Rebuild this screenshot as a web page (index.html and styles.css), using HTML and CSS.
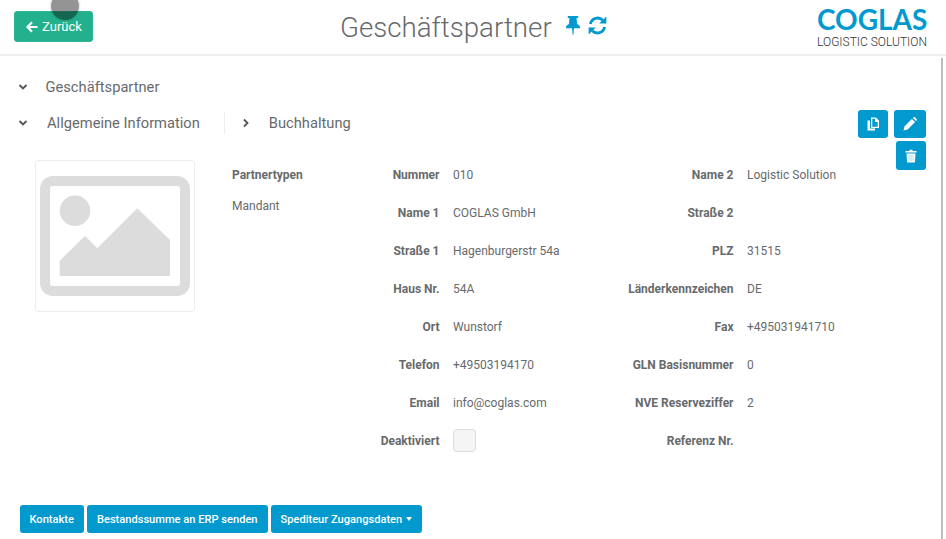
FILE: index.html
```html
<!DOCTYPE html>
<html lang="de">
<head>
<meta charset="utf-8">
<title>Geschäftspartner</title>
<link rel="stylesheet" href="styles.css">
</head>
<body>
<header class="top">
  <div class="ripple"></div>
  <button class="btn-back"><svg class="ico-arrow" viewBox="0 0 12 12"><path d="M6 1.200 1.500 6 6 10.800M1.800 6H11.500" fill="none" stroke="#fff" stroke-width="2.200"/></svg>Zurück</button>
  <div class="title-wrap">
    <h1 class="title">Geschäftspartner</h1>
    <svg class="ico-pin" viewBox="0 0 16 20"><path d="M2.500 0h11v2h-1.800l.6 6.500c1.900.8 3.200 2.300 3.200 4.300H9l-.6 7h-.8l-.6-7H.5C.5 10.800 1.800 9.300 3.700 8.500L4.300 2H2.500z" fill="#0299cf"/></svg>
    <svg class="ico-sync" viewBox="0 0 20 20"><path d="M2.500 8.500A7.800 7.800 0 0 1 15.600 4.400M17.500 11.500A7.800 7.800 0 0 1 4.400 15.600" fill="none" stroke="#0299cf" stroke-width="3"/><path d="M19.300 .5v7.500h-7.500zM.7 19.500v-7.500h7.500z" fill="#0299cf"/></svg>
  </div>
  <div class="logo"><div class="logo-main">COGLAS</div><div class="logo-sub">LOGISTIC SOLUTION</div></div>
</header>
<div class="scroll-line"></div>
<main class="content">
  <div class="acc-row">
    <svg class="chev" viewBox="0 0 10 10"><path d="M1.500 3 5 6.500 8.500 3" fill="none" stroke="#555" stroke-width="1.800"/></svg>
    <span class="acc-title">Geschäftspartner</span>
  </div>
  <div class="tabs">
    <svg class="chev" viewBox="0 0 10 10"><path d="M1.500 3 5 6.500 8.500 3" fill="none" stroke="#555" stroke-width="1.800"/></svg>
    <span class="tab tab-first">Allgemeine Information</span>
    <span class="tab-sep"></span>
    <svg class="chev chev-right" viewBox="0 0 10 10"><path d="M3 1.500 6.500 5 3 8.500" fill="none" stroke="#555" stroke-width="1.800"/></svg>
    <span class="tab">Buchhaltung</span>
    <div class="actions">
      <button class="icon-btn"><svg viewBox="0 0 14 14" class="ico-s"><path d="M5 .5h5L13 3.500V11H5z M1.500 3.500H4v8h5V13.500H1.500z" fill="#fff"/><path d="M6.300 1.800h2.700V5h2.700v4.700H6.300z" fill="#0299cf"/></svg></button>
      <button class="icon-btn icon-btn-wide"><svg viewBox="0 0 14 14" class="ico-s"><path d="M.5 13.500 1.400 9.400 8.900 1.900l3.200 3.200-7.500 7.500zM9.900 1l.7-.6c.5-.4 1.100-.4 1.500 0l1.500 1.500c.4.400.4 1 0 1.500l-.6.700z" fill="#fff"/></svg></button>
      <button class="icon-btn icon-btn-del"><svg viewBox="0 0 14 14" class="ico-s"><path d="M1.500 2h3.700L5.800.7h2.400L8.800 2h3.700v1.500h-11zM2.500 4.500h9l-.6 9H3.100z" fill="#fff"/><rect x="4.300" y="6" width="5.400" height="6" fill="#d6edf6"/></svg></button>
    </div>
  </div>
  <section class="detail">
    <div class="photo">
      <svg viewBox="0 0 150 120" class="photo-svg">
        <rect x="5" y="5" width="140" height="110" rx="8" fill="none" stroke="#dcdcdc" stroke-width="10"/>
        <circle cx="35" cy="34.700" r="15.300" fill="#dcdcdc"/>
        <path d="M19.700 100V84.700L45 60 57.300 72.300 97.300 32.300 130 64V100z" fill="#dcdcdc"/>
      </svg>
    </div>
    <div class="types">
      <div class="lbl">Partnertypen</div>
      <div class="val types-val">Mandant</div>
    </div>
    <div class="grid">
      <div class="lbl r">Nummer</div><div class="val">010</div><div class="lbl r">Name 2</div><div class="val">Logistic Solution</div>
      <div class="lbl r">Name 1</div><div class="val">COGLAS GmbH</div><div class="lbl r">Straße 2</div><div class="val"></div>
      <div class="lbl r">Straße 1</div><div class="val">Hagenburgerstr 54a</div><div class="lbl r">PLZ</div><div class="val">31515</div>
      <div class="lbl r">Haus Nr.</div><div class="val">54A</div><div class="lbl r">Länderkennzeichen</div><div class="val">DE</div>
      <div class="lbl r">Ort</div><div class="val">Wunstorf</div><div class="lbl r">Fax</div><div class="val">+495031941710</div>
      <div class="lbl r">Telefon</div><div class="val">+49503194170</div><div class="lbl r">GLN Basisnummer</div><div class="val">0</div>
      <div class="lbl r">Email</div><div class="val">info@coglas.com</div><div class="lbl r">NVE Reserveziffer</div><div class="val">2</div>
      <div class="lbl r">Deaktiviert</div><div class="val"><span class="check"></span></div><div class="lbl r">Referenz Nr.</div><div class="val"></div>
    </div>
  </section>
  <div class="footer-btns">
    <button class="btn">Kontakte</button>
    <button class="btn">Bestandssumme an ERP senden</button>
    <button class="btn">Spediteur Zugangsdaten<span class="caret"></span></button>
  </div>
</main>
</body>
</html>
```
FILE: styles.css
```css
* { box-sizing: border-box; }
html, body { margin: 0; height: 539px; overflow: hidden; }
body { background: #fff; font-family: Roboto, sans-serif; color: #676a6c; font-size: 12px; position: relative; }
button { font-family: Roboto, sans-serif; border: 0; cursor: pointer; }

.top { height: 56px; border-bottom: 2px solid #eee; display: flex; align-items: flex-start; position: relative; }
.ripple { position: absolute; left: 51px; top: -8px; width: 28px; height: 28px; border-radius: 50%; background: rgba(0,0,0,.42); box-shadow: 0 0 2px 1px rgba(0,0,0,.12); z-index: 2; }
.btn-back { margin: 11px 0 0 14px; width: 79px; height: 31px; background: #23b08c; color: #fff; font-size: 13px; border-radius: 3px; border: 1px solid #2bb594; display: flex; align-items: center; justify-content: center; padding: 0 0 0 1px; gap: 4px; }
.ico-arrow { width: 12px; height: 12px; }
.title-wrap { display: flex; align-items: center; margin: 11px 0 0 247px; height: 32px; }
.title { margin: 0; font-weight: 300; font-size: 27.700px; color: #676a6c; white-space: nowrap; }
.ico-pin { width: 16px; height: 19px; margin-left: 13px; margin-top: -4px; }
.ico-sync { width: 19px; height: 19px; margin-left: 7px; margin-top: -3px; }
.logo { margin-left: auto; margin-right: 19px; margin-top: 5px; width: 110px; text-align: center; }
.logo-main { font-family: Lato, sans-serif; font-weight: 700; font-size: 28px; line-height: 28px; color: #0299cf; white-space: nowrap; }
.logo-sub { font-weight: 300; font-size: 12px; line-height: 16px; margin-top: 1px; color: #333; white-space: nowrap; }

.scroll-line { position: absolute; left: 941px; top: 58px; width: 2px; height: 481px; background: #bcbcbc; }

.content { height: 483px; padding: 21px 0 6px 18px; display: flex; flex-direction: column; }
.acc-row, .tabs { display: flex; align-items: center; height: 20px; flex: none; }
.tabs { margin-top: 16px; }
.chev { width: 10px; height: 10px; flex: none; }
.acc-title { margin-left: 17.500px; font-size: 14.700px; }
.tab { font-size: 14.700px; }
.tab-first { margin-left: 19px; }
.tab-sep { width: 1px; height: 22px; background: #eee; margin: 0 0 0 24px; }
.chev-right { margin: 0 18px 0 16px; }

.actions { margin: -3px 20px 0 auto; align-self: flex-start; width: 68px; flex: none; display: flex; flex-wrap: wrap; justify-content: flex-end; gap: 3px 6px; }
.icon-btn { width: 30px; height: 28px; background: #0299cf; border-radius: 3px; padding: 0; display: flex; align-items: center; justify-content: center; }
.icon-btn-wide { width: 32px; }
.icon-btn-del { height: 29px; }
.ico-s { width: 14px; height: 14px; }

.detail { display: flex; margin-top: 27px; margin-left: 17px; flex: none; }
.photo { width: 160px; height: 152px; border: 1px solid #eee; border-radius: 3px; padding: 15px 0 0 4px; flex: none; }
.photo-svg { display: block; width: 150px; height: 120px; }
.types { margin-left: 37px; width: 130px; flex: none; padding-top: 8px; }
.types-val { margin-top: 17px; }
.lbl { font-weight: 700; font-size: 12px; line-height: 14px; color: #676a6c; }
.val { font-size: 12px; line-height: 14px; color: #676a6c; }
.r { text-align: right; }
.grid { display: grid; grid-template-columns: 77.500px 140px 127px 1fr; column-gap: 13.500px; row-gap: 24px; padding-top: 8px; }
.grid .lbl { white-space: nowrap; }
.check { display: block; width: 23px; height: 23px; margin-top: -5px; border: 1px solid #ddd; border-radius: 4px; background: #f5f5f5; }

.footer-btns { margin-top: auto; margin-left: 1.500px; display: flex; gap: 3px; }
.btn { height: 28px; background: #0299cf; color: #fff; font-size: 11.100px; font-weight: 500; border-radius: 3px; padding: 0 10px; display: flex; align-items: center; white-space: nowrap; }
.caret { width: 0; height: 0; border-top: 4px solid #fff; border-left: 3px solid transparent; border-right: 3px solid transparent; margin-left: 4px; }
```
